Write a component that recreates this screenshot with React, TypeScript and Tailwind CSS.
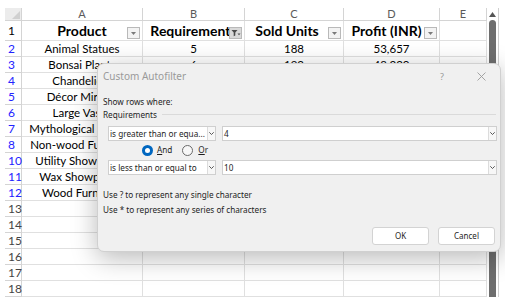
import React from 'react';

const cols = 'grid grid-cols-[17px_121px_102px_99px_96px_47px]';

// values of rows 4-12 sit under the dialog, so only the first two rows carry them
const rows = [
  { n: '2', a: 'Animal Statues', b: '5', c: '188', d: '53,657' },
  { n: '3', a: 'Bonsai Plants', b: '6', c: '192', d: '48,320' },
  { n: '4', a: 'Chandeliers' },
  { n: '5', a: 'Décor Mirrors' },
  { n: '6', a: 'Large Vases' },
  { n: '7', a: 'Mythological Statues' },
  { n: '8', a: 'Non-wood Furniture' },
  { n: '10', a: 'Utility Showpieces' },
  { n: '11', a: 'Wax Showpieces' },
  { n: '12', a: 'Wood Furniture' },
  { n: '13' }, { n: '14' }, { n: '15' }, { n: '16' }, { n: '17' }, { n: '18' },
];

function FilterBtn({ active }: { active?: boolean }) {
  return (
    <span className={`absolute right-[2px] top-[6px] flex h-[12px] w-[13px] items-center justify-center border border-[#b9b9b9] ${active ? 'bg-[#d9d9d9]' : 'bg-[#f3f3f3]'}`}>
      {active ? (
        <svg width="10" height="8" viewBox="0 0 10 8">
          <path d="M0.5 1h6L4.3 3.6v3L2.7 7.3V3.6z" fill="#4a4a4a" />
          <path d="M6.5 4.5h3L8 6.2z" fill="#4a4a4a" />
        </svg>
      ) : (
        <svg width="5" height="3" viewBox="0 0 5 3">
          <path d="M0 0h5L2.5 3z" fill="#7a7a7a" />
        </svg>
      )}
    </span>
  );
}

function Chevron() {
  return (
    <span className="flex w-[8px] items-center justify-center border-l border-[#dcdcdc] bg-[#f7f7f7]">
      <svg width="5" height="3" viewBox="0 0 5 3">
        <path d="M0.3 0.3L2.5 2.5L4.7 0.3" stroke="#444" strokeWidth="0.9" fill="none" />
      </svg>
    </span>
  );
}

function Combo({ text, className }: { text: string; className: string }) {
  return (
    <div className={`flex h-[15px] border border-[#cfcfcf] bg-white ${className}`}>
      <span className="flex-1 overflow-hidden whitespace-nowrap pl-[1px] leading-[13px]">{text}</span>
      <Chevron />
    </div>
  );
}

export default function App() {
  return (
    <div className="relative h-[304px] w-[505px] overflow-hidden bg-white font-['Lato',sans-serif]">
      <div className="ml-[5px] mt-[8px] flex">
        <div>
          {/* column letters */}
          <div className={`${cols} h-[13px] text-[11px] leading-[12px] text-[#5a5a5a]`}>
            <div className="relative border-r border-b border-[#d4d4d4] bg-[#ececec]">
              <svg className="absolute bottom-[1px] right-[1px]" width="8" height="8" viewBox="0 0 8 8">
                <path d="M8 0V8H0z" fill="#d0d0d0" />
              </svg>
            </div>
            {['A', 'B', 'C', 'D', 'E'].map((l) => (
              <div key={l} className="border-r border-b border-[#d4d4d4] text-center">{l}</div>
            ))}
          </div>

          {/* header row */}
          <div className={`${cols} h-[20px] text-[14px] font-bold leading-[19px] text-black`}>
            <div className="border-r border-b border-[#d4d4d4] pl-[3px] text-[12px] font-normal">1</div>
            <div className="relative border-r border-b border-[#e0e0e0] text-center">Product<FilterBtn /></div>
            <div className="relative overflow-hidden whitespace-nowrap border-r border-b border-[#e0e0e0] text-center">Requirements<FilterBtn active /></div>
            <div className="relative border-r border-b border-[#e0e0e0] pr-[14px] text-center">Sold Units<FilterBtn /></div>
            <div className="relative border-r border-b border-[#e0e0e0] pr-[10px] text-center">Profit (INR)<FilterBtn /></div>
            <div className="border-r border-b border-[#e0e0e0]" />
          </div>

          {rows.map((r) => {
            const filtered = Number(r.n) <= 12;
            return (
              <div key={r.n} className={`${cols} h-[16px] text-[11.5px] leading-[15px] text-black`}>
                <div className={`border-r border-b border-[#d4d4d4] pl-[3px] text-[12px] ${filtered ? 'text-[#2323ff]' : 'text-[#444]'}`}>{r.n}</div>
                <div className="overflow-hidden whitespace-nowrap border-r border-b border-[#e0e0e0] text-center">{r.a}</div>
                <div className="border-r border-b border-[#e0e0e0] text-center">{r.b}</div>
                <div className="border-r border-b border-[#e0e0e0] text-center">{r.c}</div>
                <div className="border-r border-b border-[#e0e0e0] text-center">{r.d}</div>
                <div className="border-r border-b border-[#e0e0e0]" />
              </div>
            );
          })}
        </div>

        {/* vertical scrollbar */}
        <div className="flex h-[289px] w-[12px] flex-col items-center border-r border-[#cfcfcf] bg-white">
          <svg className="mt-[4px]" width="7" height="5" viewBox="0 0 7 5">
            <path d="M3.5 0L7 5H0z" fill="#555" />
          </svg>
          <div className="mt-[3px] w-[7px] flex-1 rounded-t-[4px] bg-[#6e6e6e]" />
        </div>
      </div>

      {/* Custom Autofilter dialog */}
      <div className="absolute left-[97px] top-[63px] flex h-[189px] w-[404px] flex-col rounded-[7px] border border-[#d0d0d0] bg-[#f0f0f0] font-['Noto_Sans',sans-serif] text-[8.2px] text-[#1e1e1e] shadow-[0_6px_26px_rgba(0,0,0,0.28)]">
        <div className="flex h-[25px] items-center pl-[5px] text-[10px] text-[#9a9a9a]">
          <span className="flex-1">Custom Autofilter</span>
          <span className="mr-[33px] text-[9px]">?</span>
          <svg className="mr-[14px]" width="9" height="9" viewBox="0 0 9 9">
            <path d="M0.5 0.5L8.5 8.5M8.5 0.5L0.5 8.5" stroke="#9a9a9a" strokeWidth="0.9" />
          </svg>
        </div>
        <div className="mt-[6px] h-[13px] pl-[5px] leading-[13px]">Show rows where:</div>
        <div className="flex h-[13px] items-center pl-[5px] pr-[4px] leading-[13px]">
          <span>Requirements</span>
          <span className="ml-[5px] flex-1 border-t border-[#dadada]" />
        </div>

        <div className="mt-[5px] flex pl-[10px] pr-[3px]">
          <Combo text="is greater than or equa..." className="w-[108px]" />
          <Combo text="4" className="ml-[6px] flex-1" />
        </div>

        <div className="flex h-[19px] items-center pl-[44px]">
          <span className="flex h-[11px] w-[11px] items-center justify-center rounded-full bg-[#0067c0]">
            <span className="h-[5px] w-[5px] rounded-full bg-white" />
          </span>
          <span className="ml-[4px]"><span className="underline">A</span>nd</span>
          <span className="ml-[10px] h-[11px] w-[11px] rounded-full border border-[#6a6a6a] bg-[#f7f7f7]" />
          <span className="ml-[5px]"><span className="underline">O</span>r</span>
        </div>

        <div className="flex pl-[10px] pr-[3px]">
          <Combo text="is less than or equal to" className="w-[108px]" />
          <Combo text="10" className="ml-[6px] flex-1" />
        </div>

        <div className="mt-[12px] h-[15px] pl-[5px] leading-[15px]">Use ? to represent any single character</div>
        <div className="h-[15px] pl-[5px] leading-[15px]">Use * to represent any series of characters</div>

        <div className="mt-[10px] flex justify-end gap-[9px] pr-[5px]">
          <button className="h-[18px] w-[57px] rounded-[3px] border border-[#d3d3d3] bg-white text-[8px]">OK</button>
          <button className="h-[18px] w-[57px] rounded-[3px] border border-[#d3d3d3] bg-white text-[8px]">Cancel</button>
        </div>
      </div>
    </div>
  );
}
